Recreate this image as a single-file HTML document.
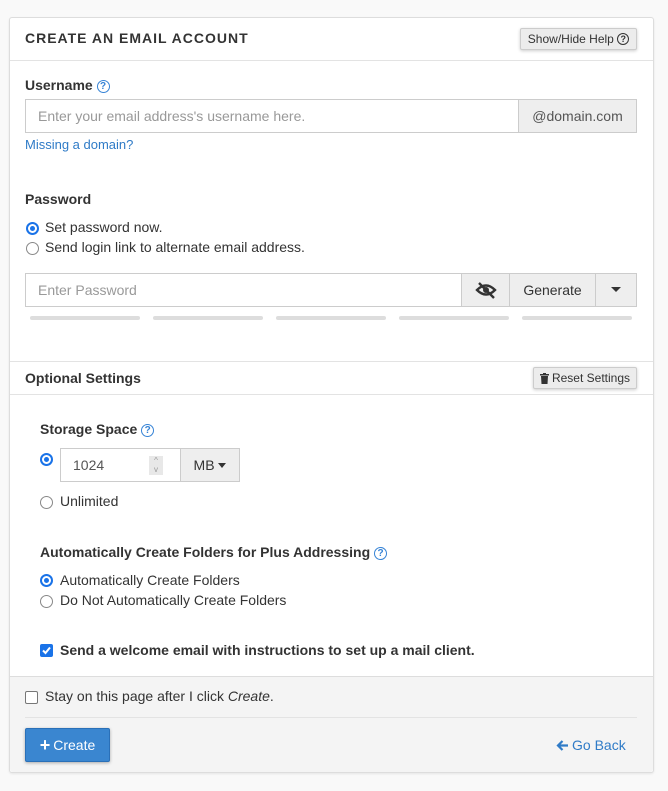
<!DOCTYPE html>
<html><head><meta charset="utf-8"><style>
*{box-sizing:border-box;margin:0;padding:0}
body{width:668px;height:791px;background:#f9f9f9;font-family:"Liberation Sans",sans-serif;font-size:14px;color:#333;position:relative;overflow:hidden}
.a{position:absolute;white-space:nowrap}
.card{position:absolute;left:9px;top:17px;width:645px;height:756px;background:#fff;border:1px solid #ddd;border-radius:3px;box-shadow:0 1px 2px rgba(0,0,0,.08)}
.hl{position:absolute;left:10px;width:643px;height:1px;background:#e3e3e3}
.btn{position:absolute;background:#ececec;border:1px solid #ccc;border-radius:2px;font-size:12px;color:#333;box-shadow:0 1px 3px rgba(0,0,0,.2);display:flex;align-items:center;justify-content:center}
.q{display:inline-block;width:13px;height:13px;border:1.3px solid #3683d6;border-radius:50%;color:#3683d6;font-size:10px;line-height:11px;text-align:center;font-weight:bold;vertical-align:1px}
.inp{position:absolute;border:1px solid #ccc;background:#fff;color:#999;padding-left:12px;display:flex;align-items:center}
.add{position:absolute;border:1px solid #ccc;background:#eee;color:#555;display:flex;align-items:center;justify-content:center}
.r{position:absolute;width:13px;height:13px;border:1.5px solid #888;border-radius:50%;background:#fff}
.r.on{border:2px solid #1a73e8}
.r.on::after{content:"";position:absolute;left:2px;top:2px;width:5px;height:5px;border-radius:50%;background:#1a73e8}
.bar{position:absolute;top:316px;height:4px;width:110px;background:#ddd;border-radius:2px}
</style></head><body>
<div class="card"></div>
<div class="a" style="left:25px;top:30px;font-size:14px;font-weight:bold;letter-spacing:1px;color:#333">CREATE AN EMAIL ACCOUNT</div>
<div class="btn" style="left:520px;top:28px;width:117px;height:22px">Show/Hide Help&nbsp;<span class="q" style="color:#333;border-color:#333;width:12px;height:12px;font-size:9px;line-height:10px">?</span></div>
<div class="hl" style="top:60px"></div>
<div class="a" style="left:25px;top:77px;font-weight:bold">Username <span class="q">?</span></div>
<div class="inp" style="left:25px;top:99px;width:494px;height:34px">Enter your email address's username here.</div>
<div class="add" style="left:518px;top:99px;width:119px;height:34px">@domain.com</div>
<div class="a" style="left:25px;top:137px;font-size:13px;color:#2f7bc7">Missing a domain?</div>
<div class="a" style="left:25px;top:191px;font-weight:bold">Password</div>
<div class="r on" style="left:26px;top:222px"></div><div class="a" style="left:45px;top:219px">Set password now.</div>
<div class="r" style="left:26px;top:242px"></div><div class="a" style="left:45px;top:239px">Send login link to alternate email address.</div>
<div class="inp" style="left:25px;top:273px;width:437px;height:34px">Enter Password</div>
<div class="add" style="left:461px;top:273px;width:49px;height:34px"><svg width="22" height="18" viewBox="0 0 22 18"><path d="M2 9 Q11 0 20 9 Q11 18 2 9Z" fill="none" stroke="#333" stroke-width="2.4"/><circle cx="11" cy="9" r="3" fill="#333"/><path d="M4 2 L19 17" stroke="#333" stroke-width="2.4"/></svg></div>
<div class="add" style="left:509px;top:273px;width:87px;height:34px;color:#333">Generate</div>
<div class="add" style="left:595px;top:273px;width:42px;height:34px"><svg width="10" height="6"><path d="M0 0H10L5 5Z" fill="#333"/></svg></div>
<div class="bar" style="left:30px"></div><div class="bar" style="left:153px"></div><div class="bar" style="left:276px"></div><div class="bar" style="left:399px"></div><div class="bar" style="left:522px"></div>
<div class="hl" style="top:361px"></div>
<div class="a" style="left:25px;top:370px;font-weight:bold">Optional Settings</div>
<div class="btn" style="left:533px;top:367px;width:104px;height:22px"><svg width="9" height="11" style="margin-right:3px"><path d="M0 1H9V2.5H0Z M1 3H8L7.5 11H1.5Z M3 0H6V1H3Z" fill="#333"/></svg>Reset Settings</div>
<div class="hl" style="top:394px"></div>
<div class="a" style="left:40px;top:421px;font-weight:bold">Storage Space <span class="q">?</span></div>
<div class="r on" style="left:40px;top:453px"></div>
<div class="inp" style="left:60px;top:448px;width:121px;height:34px;color:#555">1024<span style="position:absolute;left:88px;top:7px;width:14px;height:19px;background:#e8e8e8;color:#999;font-size:8px;text-align:center;line-height:9px">^<br>v</span></div>
<div class="add" style="left:180px;top:448px;width:60px;height:34px;color:#333">MB&nbsp;<svg width="8" height="5"><path d="M0 0H8L4 5Z" fill="#333"/></svg></div>
<div class="r" style="left:40px;top:496px"></div><div class="a" style="left:60px;top:493px">Unlimited</div>
<div class="a" style="left:40px;top:544px;font-weight:bold">Automatically Create Folders for Plus Addressing <span class="q">?</span></div>
<div class="r on" style="left:40px;top:574px"></div><div class="a" style="left:60px;top:572px">Automatically Create Folders</div>
<div class="r" style="left:40px;top:595px"></div><div class="a" style="left:60px;top:592px">Do Not Automatically Create Folders</div>
<div class="a" style="left:40px;top:644px;width:13px;height:13px;background:#1a73e8;border-radius:2px"><svg width="13" height="13"><path d="M3 6.5L5.5 9L10 3.5" stroke="#fff" stroke-width="2" fill="none"/></svg></div>
<div class="a" style="left:60px;top:642px;font-weight:bold">Send a welcome email with instructions to set up a mail client.</div>
<div class="a" style="left:10px;top:676px;width:643px;height:96px;background:#f4f4f4;border-top:1px solid #ddd;border-radius:0 0 3px 3px"></div>
<div class="a" style="left:25px;top:691px;width:13px;height:13px;border:1.5px solid #777;border-radius:2px;background:#fff"></div>
<div class="a" style="left:45px;top:688px">Stay on this page after I click <i>Create</i>.</div>
<div class="a" style="left:25px;top:717px;width:612px;height:1px;background:#e3e3e3"></div>
<div class="a" style="left:25px;top:728px;width:85px;height:34px;background:#3a86d0;border:1px solid #2a70b8;border-radius:2px;color:#fff;display:flex;align-items:center;justify-content:center;box-shadow:0 1px 3px rgba(0,0,0,.3)"><b style="font-size:18px;margin-right:3px">+</b>Create</div>
<svg class="a" style="left:556px;top:739px" width="13" height="13" viewBox="0 0 13 13"><path d="M12 6.5H2M6.5 2L2 6.5L6.5 11" stroke="#2f7bc7" stroke-width="2.2" fill="none"/></svg>
<div class="a" style="left:572px;top:737px;color:#2f7bc7">Go Back</div>
</body></html>
